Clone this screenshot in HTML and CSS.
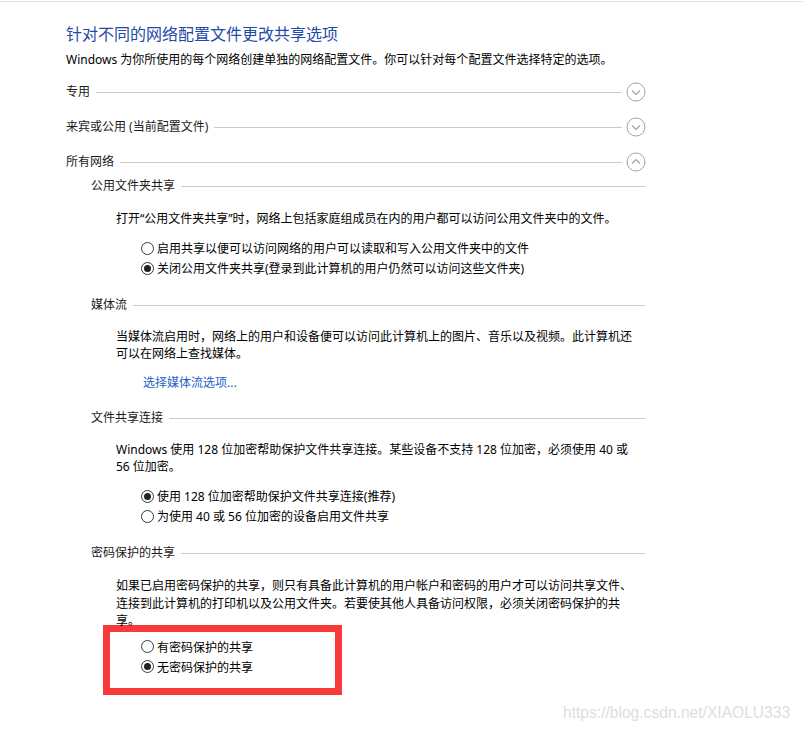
FILE: index.html
```html
<!DOCTYPE html>
<html lang="zh-CN">
<head>
<meta charset="utf-8">
<title>高级共享设置</title>
<link rel="stylesheet" href="styles.css">
</head>
<body>
<div class="topline"></div>
<div class="page">
  <h1 class="title">针对不同的网络配置文件更改共享选项</h1>
  <p class="desc">Windows 为你所使用的每个网络创建单独的网络配置文件。你可以针对每个配置文件选择特定的选项。</p>

  <div class="group-row first">
    <span class="group-label">专用</span>
    <span class="rule"></span>
    <svg class="toggle" width="20" height="20" viewBox="0 0 20 20"><circle cx="10" cy="10" r="9" fill="none" stroke="#a3a3a3" stroke-width="1"/><polyline points="6,8.5 10,12.5 14,8.5" fill="none" stroke="#a3a3a3" stroke-width="1.2"/></svg>
  </div>
  <div class="group-row">
    <span class="group-label">来宾或公用 (当前配置文件)</span>
    <span class="rule"></span>
    <svg class="toggle" width="20" height="20" viewBox="0 0 20 20"><circle cx="10" cy="10" r="9" fill="none" stroke="#a3a3a3" stroke-width="1"/><polyline points="6,8.5 10,12.5 14,8.5" fill="none" stroke="#a3a3a3" stroke-width="1.2"/></svg>
  </div>
  <div class="group-row">
    <span class="group-label">所有网络</span>
    <span class="rule"></span>
    <svg class="toggle" width="20" height="20" viewBox="0 0 20 20"><circle cx="10" cy="10" r="9" fill="none" stroke="#a3a3a3" stroke-width="1"/><polyline points="6,11.5 10,7.5 14,11.5" fill="none" stroke="#a3a3a3" stroke-width="1.2"/></svg>
  </div>

  <div class="section s1">
    <div class="sub-row"><span class="sub-label">公用文件夹共享</span><span class="rule"></span></div>
    <div class="body">
      <p class="para">打开“公用文件夹共享”时，网络上包括家庭组成员在内的用户都可以访问公用文件夹中的文件。</p>
      <div class="radios">
        <div class="radio-row"><span class="radio"></span><span>启用共享以便可以访问网络的用户可以读取和写入公用文件夹中的文件</span></div>
        <div class="radio-row"><span class="radio on"></span><span>关闭公用文件夹共享(登录到此计算机的用户仍然可以访问这些文件夹)</span></div>
      </div>
    </div>
  </div>

  <div class="section s2">
    <div class="sub-row"><span class="sub-label">媒体流</span><span class="rule"></span></div>
    <div class="body">
      <p class="para">当媒体流启用时，网络上的用户和设备便可以访问此计算机上的图片、音乐以及视频。此计算机还可以在网络上查找媒体。</p>
      <a class="link" href="#">选择媒体流选项...</a>
    </div>
  </div>

  <div class="section s3">
    <div class="sub-row"><span class="sub-label">文件共享连接</span><span class="rule"></span></div>
    <div class="body">
      <p class="para">Windows 使用 128 位加密帮助保护文件共享连接。某些设备不支持 128 位加密，必须使用 40 或 56 位加密。</p>
      <div class="radios">
        <div class="radio-row"><span class="radio on"></span><span>使用 128 位加密帮助保护文件共享连接(推荐)</span></div>
        <div class="radio-row"><span class="radio"></span><span>为使用 40 或 56 位加密的设备启用文件共享</span></div>
      </div>
    </div>
  </div>

  <div class="section s4">
    <div class="sub-row"><span class="sub-label">密码保护的共享</span><span class="rule"></span></div>
    <div class="body">
      <p class="para">如果已启用密码保护的共享，则只有具备此计算机的用户帐户和密码的用户才可以访问共享文件、连接到此计算机的打印机以及公用文件夹。若要使其他人具备访问权限，必须关闭密码保护的共享。</p>
      <div class="radios boxed">
        <div class="radio-row"><span class="radio"></span><span>有密码保护的共享</span></div>
        <div class="radio-row"><span class="radio on"></span><span>无密码保护的共享</span></div>
      </div>
    </div>
  </div>
</div>
<div class="watermark">https://blog.csdn.net/XIAOLU333</div>
</body>
</html>
```
FILE: styles.css
```css
html, body {
  margin: 0;
  padding: 0;
  background: #ffffff;
}
body {
  width: 803px;
  height: 733px;
  overflow: hidden;
  position: relative;
  font-family: "Noto Sans", "Noto Sans CJK SC", sans-serif;
  font-size: 12px;
  color: #000;
}
.topline {
  margin-top: 1px;
  height: 1px;
  background: #e2e2e2;
}
.page {
  padding-left: 66px;
  width: 580px;
}
.title {
  margin: 21px 0 0 0;
  font-size: 16px;
  font-weight: normal;
  line-height: 22px;
  color: #1f4aa8;
  white-space: nowrap;
}
.desc {
  margin: 6px 0 0 0;
  line-height: 17px;
  white-space: nowrap;
}
.group-row {
  display: flex;
  align-items: center;
  height: 20px;
  margin-top: 15px;
}
.group-row.first {
  margin-top: 14px;
}
.group-label, .sub-label {
  color: #1a1a1a;
  white-space: nowrap;
  line-height: 20px;
}
.rule {
  flex: 1;
  height: 1px;
  background: #cacaca;
  margin-left: 6px;
}
.toggle {
  display: block;
  margin-left: 4px;
  flex: none;
}
.section {
  margin-left: 25px;
  margin-right: 1px;
  margin-top: 17px;
}
.section.s1 {
  margin-top: 4px;
}
.sub-row {
  display: flex;
  align-items: center;
  height: 20px;
}
.body {
  padding-left: 25px;
  width: 521px;
}
.para {
  margin: 13px 0 0 0;
  line-height: 17px;
}
.s1 .para {
  margin-top: 14px;
}
.s4 .para {
  margin-top: 14px;
  line-height: 17.5px;
}
.radios {
  margin-top: 11px;
  padding-left: 25px;
}
.radio-row {
  display: flex;
  align-items: center;
  height: 20px;
  white-space: nowrap;
}
.radio {
  box-sizing: border-box;
  width: 13px;
  height: 13px;
  border: 1px solid #3a3a3a;
  border-radius: 50%;
  margin-right: 3px;
  flex: none;
  display: flex;
  align-items: center;
  justify-content: center;
}
.radio.on::after {
  content: "";
  width: 7px;
  height: 7px;
  border-radius: 50%;
  background: #222;
}
.link {
  display: block;
  margin: 12px 0 0 27px;
  line-height: 17px;
  color: #1f5fc6;
  text-decoration: none;
}
.radios.boxed {
  box-sizing: border-box;
  width: 239px;
  margin-left: -13px;
  margin-top: -5px;
  border: 7px solid #f83a3a;
  padding: 5px 0 11px 31px;
}
.watermark {
  position: absolute;
  left: 563px;
  top: 703px;
  font-family: "Liberation Sans", Arial, sans-serif;
  font-size: 15.6px;
  line-height: 20px;
  color: #dedede;
  white-space: nowrap;
}
```
